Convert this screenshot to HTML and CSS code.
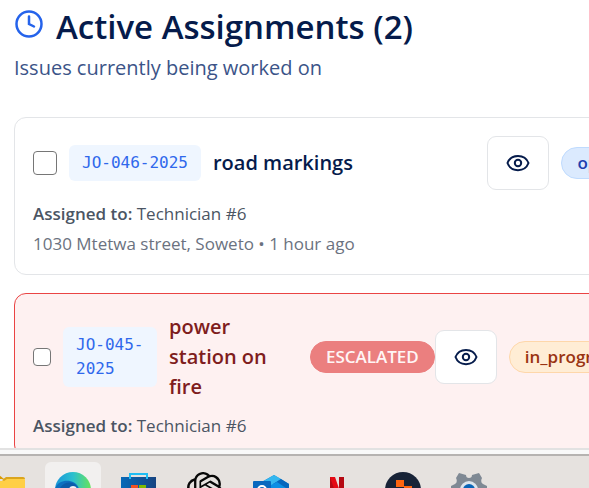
FILE: index.html
```html
<!DOCTYPE html>
<html lang="en">
<head>
<meta charset="utf-8">
<title>Active Assignments</title>
<link rel="stylesheet" href="styles.css">
</head>
<body>
<main class="view">
  <header class="heading">
    <h1 class="heading-title">
      <svg class="clock" viewBox="0 0 24 24" aria-hidden="true"><circle cx="12" cy="12" r="10"/><path d="M12 6v6l4 2"/></svg>
      Active Assignments (2)
    </h1>
    <p class="heading-note">Issues currently being worked on</p>
  </header>
  <section class="cards">
    <article class="card">
      <div class="row">
        <div class="summary">
          <input class="check" type="checkbox" aria-label="Select JO-046-2025">
          <span class="code">JO-046-2025</span>
          <h2 class="title">road markings</h2>
        </div>
        <div class="actions">
          <button class="view-button" type="button" aria-label="View JO-046-2025"><svg class="eye" viewBox="0 0 24 24" aria-hidden="true"><path d="M1.500 12C5 2.500 19 2.500 22.500 12C19 21.500 5 21.500 1.500 12Z"/><circle cx="12" cy="12" r="3.200"/></svg></button>
          <span class="badge badge-open">open</span>
        </div>
      </div>
      <div class="details">
        <p class="assignee"><strong>Assigned to:</strong> Technician #6</p>
        <p class="place">1030 Mtetwa street, Soweto • 1 hour ago</p>
      </div>
    </article>
    <article class="card card-escalated">
      <div class="row">
        <div class="summary summary-tight">
          <input class="check" type="checkbox" aria-label="Select JO-045-2025">
          <span class="code">JO-045-2025</span>
          <h2 class="title">power station on fire</h2>
          <span class="badge badge-escalated">ESCALATED</span>
        </div>
        <div class="actions">
          <button class="view-button" type="button" aria-label="View JO-045-2025"><svg class="eye" viewBox="0 0 24 24" aria-hidden="true"><path d="M1.500 12C5 2.500 19 2.500 22.500 12C19 21.500 5 21.500 1.500 12Z"/><circle cx="12" cy="12" r="3.200"/></svg></button>
          <span class="badge badge-progress">in_progress</span>
        </div>
      </div>
      <div class="details">
        <p class="assignee"><strong>Assigned to:</strong> Technician #6</p>
      </div>
    </article>
  </section>
</main>
<div class="edge"></div>
<nav class="taskbar" aria-label="Taskbar">
  <button class="app" type="button" aria-label="Files"><svg viewBox="0 0 36 36"><path d="M0 2h9l6 5H0z" fill="#d99b06"/><path d="M0 9h13l4-3h17q2 0 2 2v26H0z" fill="#ffcf45"/><path d="M13 8l4-3h17q2 0 2 2H18l-3 2z" fill="#dba51d"/></svg></button>
  <button class="app app-active" type="button" aria-label="Browser"><svg viewBox="0 0 36 36"><defs><linearGradient id="rim" x1="0" x2="1"><stop offset="0" stop-color="#1996d8"/><stop offset=".5" stop-color="#2cc0cf"/><stop offset="1" stop-color="#67e35a"/></linearGradient></defs><circle cx="18" cy="18" r="18" fill="url(#rim)"/><path d="M0 17C3 6 21 6 24 17L17 36C5 35 0 26 0 17Z" fill="#0d70c0"/><path d="M5 16C10 8 20 10 22 15C15 13 12 19 13 28C5 27 3 20 5 16Z" fill="#0b5ca9"/><circle cx="18" cy="18" r="4" fill="#f0f3f5"/></svg></button>
  <button class="app" type="button" aria-label="Store"><svg viewBox="0 0 36 36"><defs><linearGradient id="bag" x1="0" x2="1"><stop offset="0" stop-color="#0869b8"/><stop offset="1" stop-color="#174481"/></linearGradient></defs><path d="M0 5h35v27q0 3-3 3H3q-3 0-3-3z" fill="url(#bag)"/><path d="M9 7V2h17v5" fill="none" stroke="#20bdf3" stroke-width="2"/><path d="M10 13h7v7h-7z" fill="#f25022"/><path d="M18 13h7v7h-7z" fill="#7fba00"/><path d="M10 21h7v7h-7z" fill="#00a4ef"/><path d="M18 21h7v7h-7z" fill="#ffb900"/></svg></button>
  <button class="app" type="button" aria-label="Assistant"><svg viewBox="0 0 24 24"><path fill="#080808" d="M22.282 9.821a5.985 5.985 0 0 0-.516-4.911 6.046 6.046 0 0 0-6.510-2.900A6.065 6.065 0 0 0 4.981 4.182a5.985 5.985 0 0 0-3.998 2.900 6.046 6.046 0 0 0 .743 7.097 5.980 5.980 0 0 0 .511 4.911 6.051 6.051 0 0 0 6.515 2.900A5.985 5.985 0 0 0 13.260 24a6.056 6.056 0 0 0 5.772-4.206 5.990 5.990 0 0 0 3.998-2.900 6.056 6.056 0 0 0-.748-7.073zm-9.022 12.609a4.476 4.476 0 0 1-2.876-1.041l.142-.080 4.778-2.758a.795.795 0 0 0 .393-.682v-6.737l2.020 1.169a.071.071 0 0 1 .038.052v5.583a4.504 4.504 0 0 1-4.495 4.494zM3.600 18.304a4.471 4.471 0 0 1-.535-3.014l.142.085 4.783 2.759a.771.771 0 0 0 .781 0l5.843-3.369v2.332a.080.080 0 0 1-.033.062L9.740 19.950a4.499 4.499 0 0 1-6.140-1.646zM2.341 7.896a4.485 4.485 0 0 1 2.366-1.973v5.678a.766.766 0 0 0 .388.677l5.814 3.354-2.020 1.169a.076.076 0 0 1-.071 0l-4.830-2.787A4.504 4.504 0 0 1 2.341 7.896zm16.597 3.855-5.843-3.387 2.020-1.164a.076.076 0 0 1 .071 0l4.830 2.791a4.494 4.494 0 0 1-.677 8.105v-5.678a.790.790 0 0 0-.401-.667zm2.010-3.023-.142-.085-4.774-2.782a.776.776 0 0 0-.785 0L9.409 9.230V6.897a.066.066 0 0 1 .028-.061l4.830-2.787a4.499 4.499 0 0 1 6.681 4.679zM8.307 12.863l-2.020-1.164a.080.080 0 0 1-.038-.057V6.075a4.499 4.499 0 0 1 7.376-3.454l-.142.081L8.704 5.460a.795.795 0 0 0-.393.681zm1.098-2.365 2.602-1.500 2.607 1.500v2.999l-2.598 1.500-2.607-1.500z"/></svg></button>
  <button class="app" type="button" aria-label="Mail"><svg viewBox="0 0 36 36"><path d="M5 12L21 3l15 9v20H5z" fill="#087fd5"/><path d="M9 10L21 3l7 4-13 9z" fill="#35b7ef"/><path d="M28 7l8 5v6L20 12z" fill="#0666bd"/><path d="M18 13l6-3 12 8v14H18z" fill="#0c8ee4"/><rect y="9" width="18" height="18" rx="1" fill="#0968be"/><circle cx="9" cy="18" r="4" fill="none" stroke="#fff" stroke-width="2"/></svg></button>
  <button class="app" type="button" aria-label="Movies"><svg viewBox="0 0 36 36"><path d="M11 5h5v26h-5zM20 5h5v26h-5z" fill="#b50912"/><path d="M11 5h5l9 26h-5z" fill="#e50914"/></svg></button>
  <button class="app" type="button" aria-label="Blocks"><svg viewBox="0 0 36 36"><circle cx="18" cy="18" r="18" fill="#182337"/><path d="M11 8h8v7h-8zM19 14h8v8h-8zM11 22h8v7h-8z" fill="#ff6510"/></svg></button>
  <button class="app" type="button" aria-label="Settings"><svg viewBox="0 0 36 36"><path d="M8 1l7 2q0 3 3 3t3-3l7-2 3 5q-2 4 1 6l4 2v8l-4 2q-3 2-1 6l-6 4-7-3-7 3-6-4q2-4-1-6l-4-2v-8l4-2q3-2 1-6z" fill="#7f8994"/><circle cx="18" cy="18" r="9" fill="#dce5ed"/><circle cx="18" cy="18" r="6" fill="#0864b7"/></svg></button>
</nav>
</body>
</html>
```

FILE: styles.css
```css
* {
  box-sizing: border-box;
}

body {
  margin: 0;
  height: 100vh;
  display: flex;
  flex-direction: column;
  overflow: hidden;
  background: #fff;
  font-family: "Open Sans", "Noto Sans", sans-serif;
  font-size: 17px;
  line-height: 24px;
}

h1, h2, p {
  margin: 0;
}

.view {
  flex: 1;
  min-height: 0;
  overflow: hidden;
  padding: 6px 14px 0;
}

.heading-title {
  display: flex;
  align-items: center;
  gap: 12px;
  color: #051b4b;
  font-size: 33px;
  font-weight: 600;
  line-height: 42px;
  white-space: nowrap;
}

.clock {
  flex: none;
  width: 30px;
  height: 30px;
  margin-bottom: 6px;
  fill: none;
  stroke: #2563eb;
  stroke-width: 2;
  stroke-linecap: round;
}

.heading-note {
  margin-top: 5px;
  color: #3b5488;
  font-size: 20px;
  line-height: 30px;
}

.cards {
  display: grid;
  gap: 18px;
  min-width: 640px;
  padding-top: 34px;
}

.card {
  padding: 18px;
  border: 1px solid #e3e5e8;
  border-radius: 12px;
  background: #fff;
}

.card-escalated {
  border-color: #ea4444;
  background: #fef1f1;
}

.row,
.summary,
.actions {
  display: flex;
  align-items: center;
}

.row {
  justify-content: space-between;
}

.summary,
.actions {
  gap: 12px;
}

.summary-tight {
  display: grid;
  flex: 1;
  grid-template-columns: 18px 94px 1fr auto;
}

.check {
  appearance: none;
  width: 24px;
  height: 24px;
  margin: 0;
  border: 1px solid #767676;
  border-radius: 4px;
  background: #fff;
}

.summary-tight .check {
  width: 18px;
  height: 18px;
}

.code {
  padding: 6px 13px;
  border-radius: 6px;
  background: #eff6ff;
  color: #2f68ec;
  font-family: "DejaVu Sans Mono", monospace;
  font-size: 16px;
}

.title {
  color: #051b4b;
  font-size: 20px;
  font-weight: 600;
  line-height: 30px;
}

.card-escalated .title {
  max-width: 120px;
  color: #7f1d1d;
}

.view-button {
  display: grid;
  place-items: center;
  width: 62px;
  height: 54px;
  padding: 0;
  border: 1px solid #e3e5e8;
  border-radius: 9px;
  background: #fff;
}

.eye {
  width: 24px;
  height: 24px;
  fill: none;
  stroke: #051b4b;
  stroke-width: 2;
}

.badge {
  padding: 3px 15px;
  border: 1px solid;
  border-radius: 16px;
  font-weight: 600;
}

.badge-open {
  border-color: #bfdbfe;
  background: #dbeafe;
  color: #1e40af;
}

.badge-escalated {
  border-color: #eb7f7f;
  background: #eb7f7f;
  color: #fff5f5;
}

.badge-progress {
  border-color: #fed7aa;
  background: #ffedd5;
  color: #9a3412;
}

.details {
  display: grid;
  gap: 6px;
  margin-top: 12px;
}

.assignee {
  color: #4b5563;
}

.assignee strong {
  font-weight: 600;
}

.place {
  color: #6b7280;
}

.edge {
  flex: none;
  height: 8px;
  border-top: 2px solid #e2e2e2;
  border-bottom: 2px solid #b6b3b1;
  background: #f9f9f9;
}

.taskbar {
  flex: none;
  display: flex;
  gap: 10px;
  height: 32px;
  margin-left: -21px;
  padding-top: 6px;
  overflow: hidden;
  background: #e6e2df;
}

.app {
  flex: none;
  width: 56px;
  height: 56px;
  padding: 0;
  border: 0;
  border-radius: 6px;
  background: transparent;
}

.app svg {
  display: block;
  width: 36px;
  height: 36px;
  margin: 0 auto;
}

.app-active {
  background: #f2f0ef;
}
```
